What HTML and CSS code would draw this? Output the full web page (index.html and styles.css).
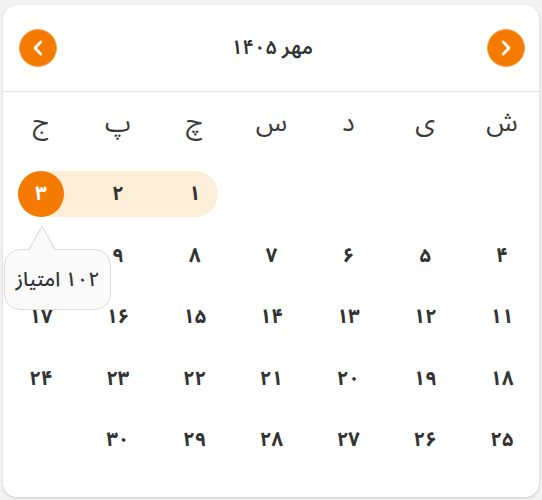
FILE: index.html
```html
<!DOCTYPE html>
<html lang="fa" dir="rtl">
<head>
<meta charset="utf-8">
<link rel="stylesheet" href="styles.css">
</head>
<body>
<div class="card">
  <div class="header">
    <button class="nav" aria-label="next">
      <svg width="20" height="20" viewBox="0 0 20 20"><path d="M7.2 4 L13 10 L7.2 16" fill="none" stroke="#fff" stroke-width="2.8" stroke-linecap="round" stroke-linejoin="round"/></svg>
    </button>
    <div class="title">مهر ۱۴۰۵</div>
    <button class="nav" aria-label="prev">
      <svg width="20" height="20" viewBox="0 0 20 20"><path d="M12.8 4 L7 10 L12.8 16" fill="none" stroke="#fff" stroke-width="2.8" stroke-linecap="round" stroke-linejoin="round"/></svg>
    </button>
  </div>
  <div class="weekdays">
    <div class="wd">ش</div><div class="wd">ی</div><div class="wd">د</div><div class="wd">س</div><div class="wd">چ</div><div class="wd">پ</div><div class="wd">ج</div>
  </div>
  <div class="weeks">
    <div class="week">
      <div class="range"></div>
      <div class="day c5">۱</div>
      <div class="day c6">۲</div>
      <div class="day c7 selected">۳
        <div class="tooltip">۱۰۲ امتیاز</div>
      </div>
    </div>
    <div class="week">
      <div class="day">۴</div><div class="day">۵</div><div class="day">۶</div><div class="day">۷</div><div class="day">۸</div><div class="day">۹</div><div class="day">۱۰</div>
    </div>
    <div class="week">
      <div class="day">۱۱</div><div class="day">۱۲</div><div class="day">۱۳</div><div class="day">۱۴</div><div class="day">۱۵</div><div class="day">۱۶</div><div class="day">۱۷</div>
    </div>
    <div class="week">
      <div class="day">۱۸</div><div class="day">۱۹</div><div class="day">۲۰</div><div class="day">۲۱</div><div class="day">۲۲</div><div class="day">۲۳</div><div class="day">۲۴</div>
    </div>
    <div class="week">
      <div class="day">۲۵</div><div class="day">۲۶</div><div class="day">۲۷</div><div class="day">۲۸</div><div class="day">۲۹</div><div class="day">۳۰</div>
    </div>
  </div>
</div>
</body>
</html>
```

FILE: styles.css
```css
* { box-sizing: border-box; }
html, body { margin: 0; padding: 0; }
body {
  background: #f3f3f3;
  font-family: "Noto Sans Arabic", "Vazirmatn", "DejaVu Sans", sans-serif;
  color: #333;
  width: 542px;
  height: 500px;
  overflow: hidden;
}
.card {
  margin: 5px 3px 0 3px;
  width: 536px;
  height: 492px;
  background: #fff;
  border-radius: 14px;
  box-shadow: 0 1px 3px rgba(0,0,0,0.18);
  direction: rtl;
}
.header {
  height: 87px;
  display: flex;
  align-items: center;
  justify-content: space-between;
  padding: 0 14px 0 16px;
  border-bottom: 1px solid #e2e2e2;
}
.nav {
  width: 38px;
  height: 38px;
  border-radius: 50%;
  border: 1px solid #f8a050;
  background: #f57a00;
  padding: 0;
  display: flex;
  align-items: center;
  justify-content: center;
}
.title {
  font-size: 20px;
  font-weight: 600;
  color: #333;
}
.weekdays, .week {
  display: grid;
  grid-template-columns: repeat(7, 46px);
  column-gap: 30.83px;
  padding: 0 14px 0 15px;
}
.weekdays {
  height: 79px;
  align-items: center;
  padding-bottom: 18px;
}
.wd {
  text-align: center;
  font-size: 26px;
  color: #3a3a3a;
}
.weeks {
  display: flex;
  flex-direction: column;
  gap: 15.5px;
}
.week {
  grid-template-rows: 46px;
}
.range {
  grid-row: 1;
  grid-column: 5 / 8;
  background: #fdefd7;
  border-radius: 23px;
}
.c5 { grid-row: 1; grid-column: 5; }
.c6 { grid-row: 1; grid-column: 6; }
.c7 { grid-row: 1; grid-column: 7; }
.day {
  display: flex;
  align-items: center;
  justify-content: center;
  font-size: 20px;
  font-weight: bold;
  color: #333;
  position: relative;
}
.selected {
  background: #f57a00;
  color: #fff;
  border-radius: 50%;
  z-index: 1;
}
.tooltip {
  position: absolute;
  top: 78px;
  left: -14px;
  width: 107px;
  height: 61px;
  background: #fafafa;
  border: 1px solid #dcdcdc;
  border-radius: 16px;
  color: #333;
  font-size: 20px;
  font-weight: 500;
  display: flex;
  align-items: center;
  justify-content: center;
  white-space: nowrap;
  z-index: 2;
}
.tooltip::before {
  content: "";
  position: absolute;
  top: -25px;
  left: 23px;
  width: 0;
  height: 0;
  border-left: 14px solid transparent;
  border-right: 14px solid transparent;
  border-bottom: 25px solid #dcdcdc;
}
.tooltip::after {
  content: "";
  position: absolute;
  top: -23px;
  left: 24px;
  width: 0;
  height: 0;
  border-left: 13px solid transparent;
  border-right: 13px solid transparent;
  border-bottom: 24px solid #fafafa;
}
```
